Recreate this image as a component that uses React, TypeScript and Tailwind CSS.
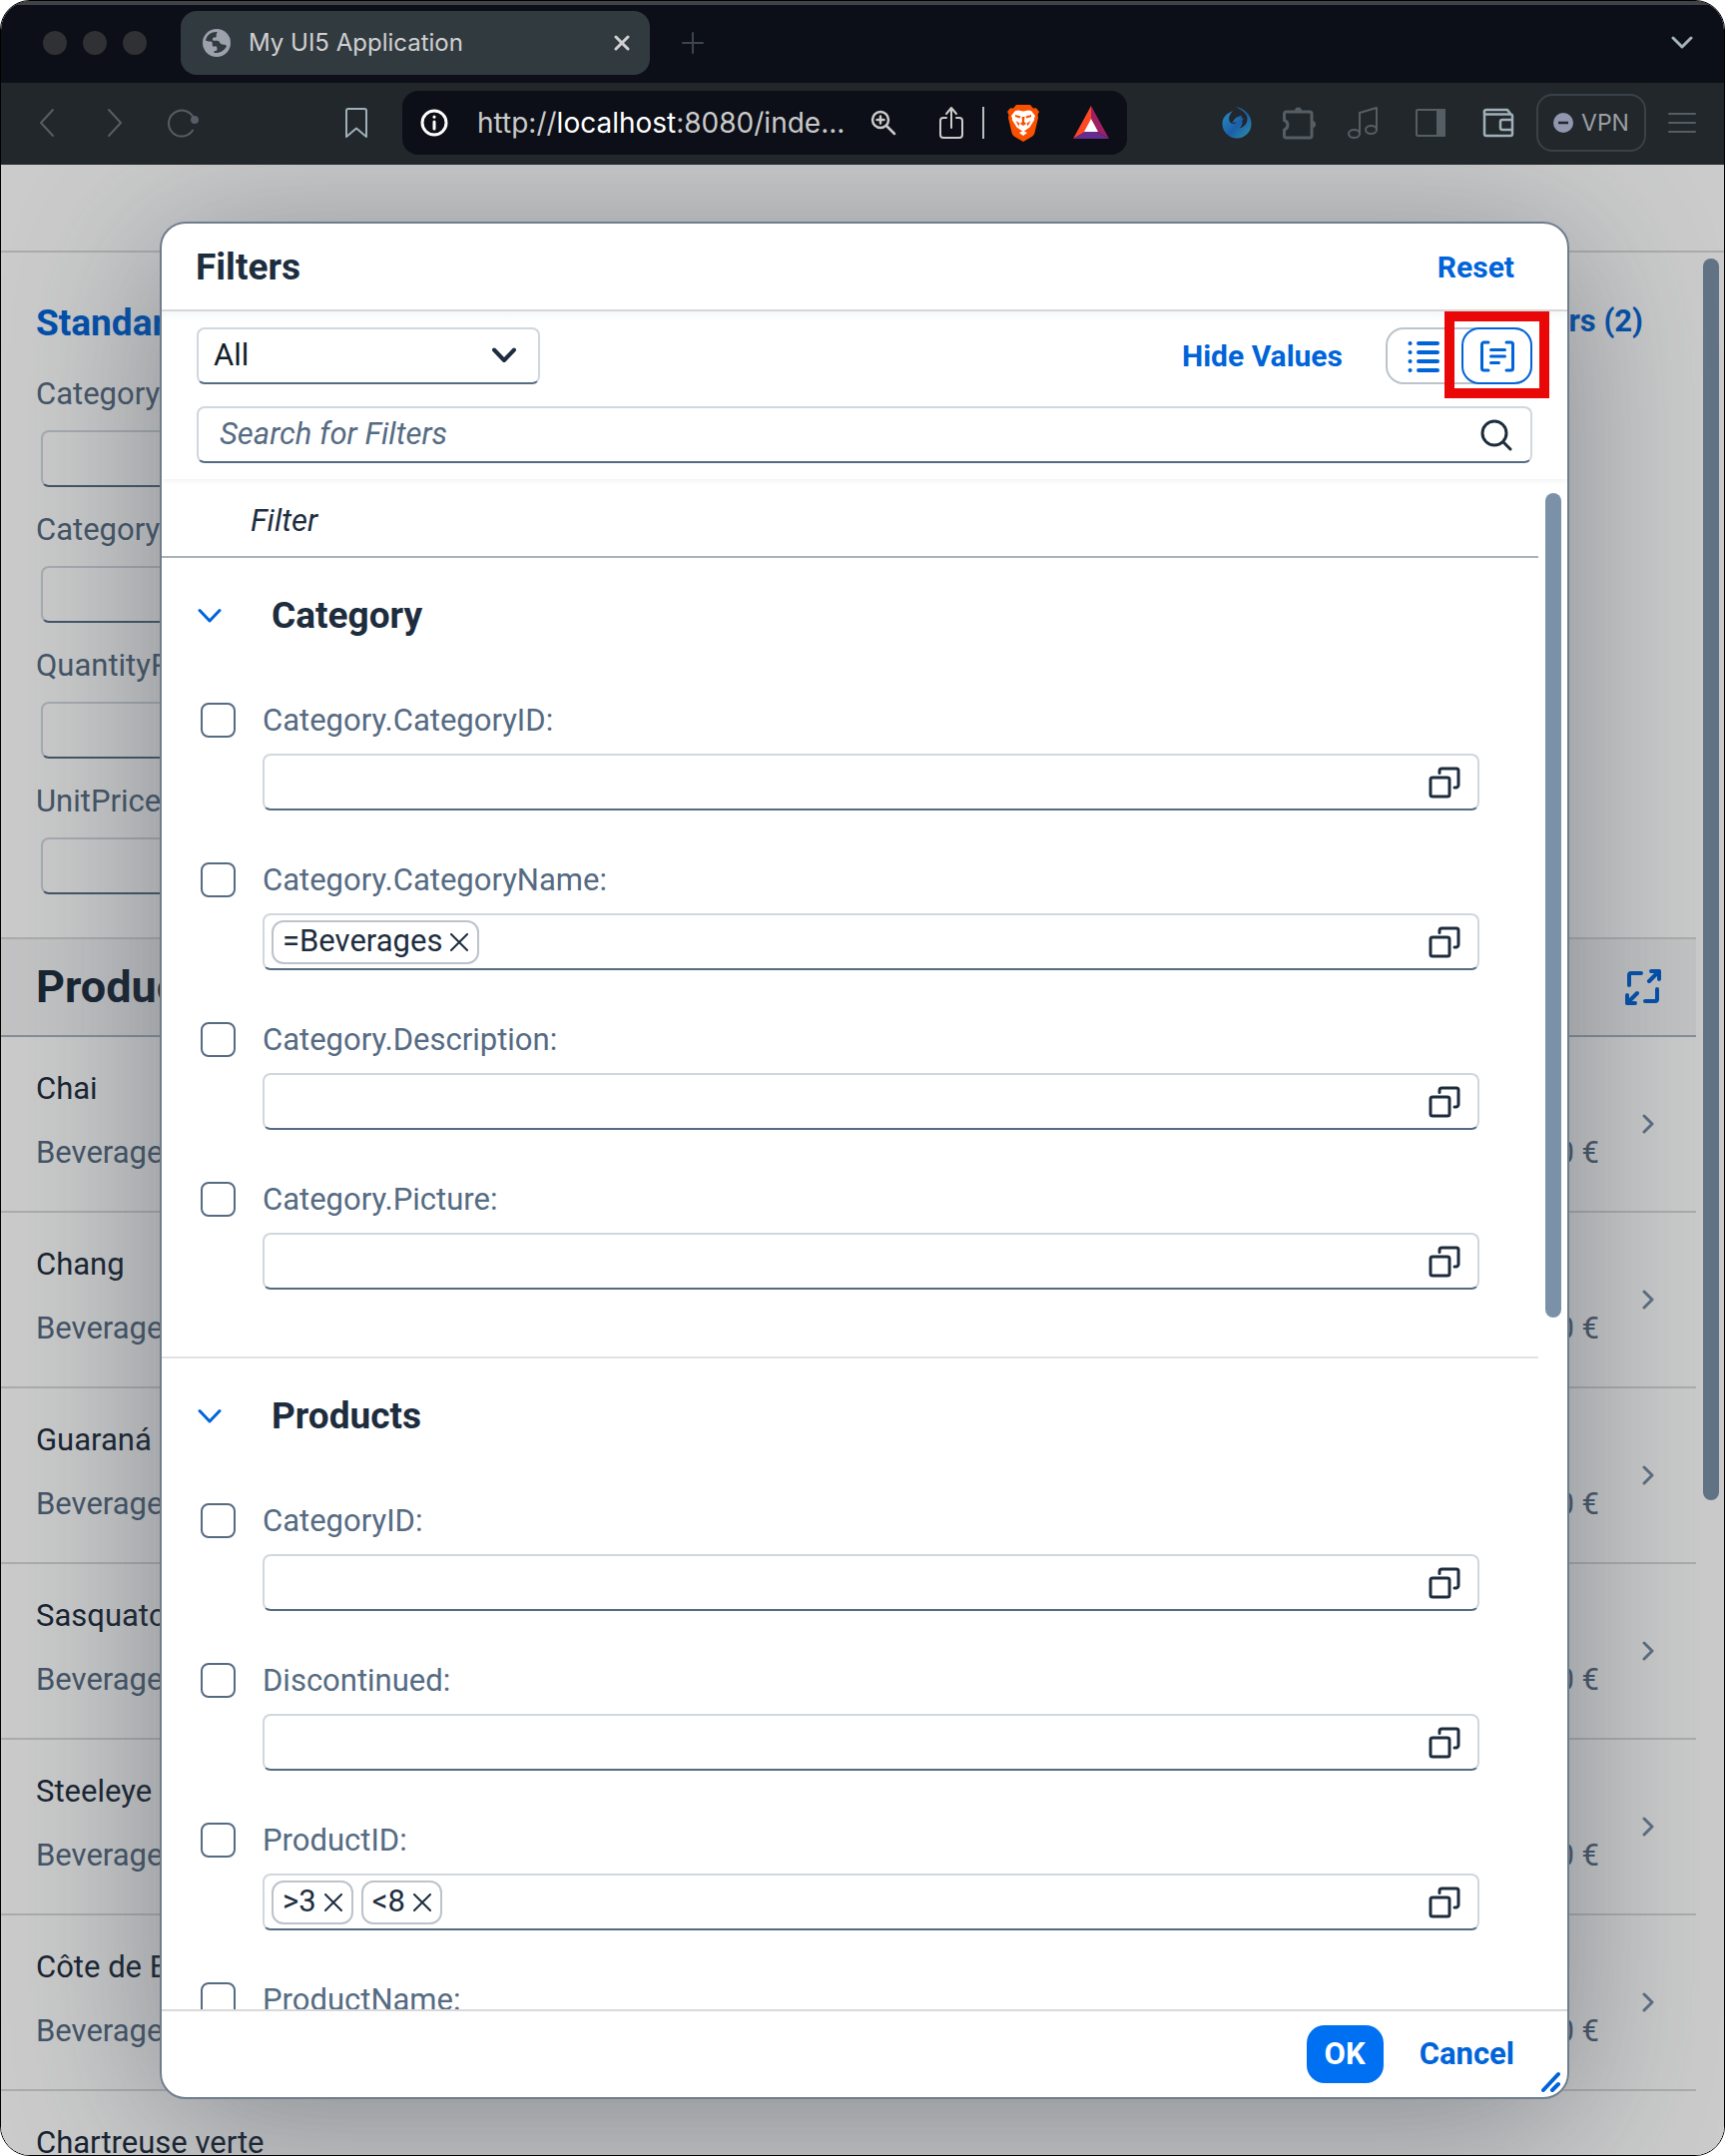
import React from "react";

type Product = { name: string; category: string; price: string };
type Field = { name: string; tokens?: string[] };

const products: Product[] = [
  { name: "Chai", category: "Beverages", price: "18.00 €" },
  { name: "Chang", category: "Beverages", price: "19.00 €" },
  { name: "Guaraná Fantástica", category: "Beverages", price: "4.50 €" },
  { name: "Sasquatch Ale", category: "Beverages", price: "14.00 €" },
  { name: "Steeleye Stout", category: "Beverages", price: "18.00 €" },
  { name: "Côte de Blaye", category: "Beverages", price: "263.50 €" },
  { name: "Chartreuse verte", category: "Beverages", price: "18.00 €" },
];

const barFields = ["Category.CategoryID:", "CategoryID:", "QuantityPerUnit:", "UnitPrice:"];

const groups: { title: string; fields: Field[] }[] = [
  {
    title: "Category",
    fields: [
      { name: "Category.CategoryID:" },
      { name: "Category.CategoryName:", tokens: ["=Beverages"] },
      { name: "Category.Description:" },
      { name: "Category.Picture:" },
    ],
  },
  {
    title: "Products",
    fields: [
      { name: "CategoryID:" },
      { name: "Discontinued:" },
      { name: "ProductID:", tokens: [">3", "<8"] },
      { name: "ProductName:" },
    ],
  },
];

function Svg({
  w,
  h,
  sw = 2,
  className,
  children,
}: {
  w: number;
  h: number;
  sw?: number;
  className?: string;
  children: React.ReactNode;
}) {
  return (
    <svg
      width={w}
      height={h}
      viewBox={`0 0 ${w} ${h}`}
      fill="none"
      stroke="currentColor"
      strokeWidth={sw}
      strokeLinecap="round"
      strokeLinejoin="round"
      className={`shrink-0 ${className ?? ""}`}
      aria-hidden="true"
    >
      {children}
    </svg>
  );
}

function ValueHelpIcon() {
  return (
    <Svg w={32} h={32} sw={3}>
      <rect x="2" y="11" width="19" height="19" rx="2" />
      <path d="M11 6.500V4.500a2.500 2.500 0 0 1 2.500-2.500H28a2 2 0 0 1 2 2V18.500a2.500 2.500 0 0 1-2.500 2.500H26" />
    </Svg>
  );
}

function DownIcon({ sw = 3 }: { sw?: number }) {
  return (
    <Svg w={24} h={16} sw={sw}>
      <path d="M2 2.500 12 13 22 2.500" />
    </Svg>
  );
}

function BrowserTabs() {
  return (
    <div className="flex h-[82px] shrink-0 items-center border-t-4 border-[#3f4347] bg-[#0c0f17] pr-[31px] pb-0.5 pl-[42px]">
      <div className="flex gap-4">
        <span className="size-6 rounded-full bg-[#2f3135]" />
        <span className="size-6 rounded-full bg-[#2f3135]" />
        <span className="size-6 rounded-full bg-[#2f3135]" />
      </div>
      <div className="ml-[34px] flex h-16 w-[470px] items-center rounded-2xl bg-[#313a3f] pr-5 pl-[22px] text-[#d0d0d2]">
        <svg width="28" height="28" viewBox="0 0 28 28" className="shrink-0" aria-hidden="true">
          <circle cx="14" cy="14" r="14" fill="#9da1ad" />
          <path
            d="M15 3C9 2.500 4 6 3 11.500c1.500.8 3 1 4.500 1 1.500 0 2.200.6 2.200 2v1.500c0 1 .6 1.500 1.500 1.500h2c.8 0 1.200.6 1.200 1.500v1.500c0 1-.6 1.500-1.800 1.500h-1v2c5 .8 11-2.500 12.400-7-.8-1-1.700-1.300-3-1.300-2.300 0-3.300-1-4.300-2.700-.6-1-1.400-1.200-2.500-1.200H11.500c-1 0-1.600-.6-1.600-1.600 0-1.100.7-1.600 1.800-1.600h.6c1 0 1.400-.5 1.400-1.400C13.700 4.700 14 3.700 15 3Z"
            fill="#313a3f"
          />
        </svg>
        <span className="ml-[18px] grow font-[Inter] text-[24px]">My UI5 Application</span>
        <button aria-label="Close tab">
          <Svg w={16} h={16} sw={3}>
            <path d="m2 2 12 12M14 2 2 14" />
          </Svg>
        </button>
      </div>
      <button aria-label="New tab" className="ml-8 text-[#3c454b]">
        <Svg w={22} h={22}>
          <path d="M11 1v20M1 11h20" />
        </Svg>
      </button>
      <button aria-label="Tab list" className="ml-auto text-[#a4b3bb]">
        <Svg w={22} h={16} sw={3}>
          <path d="m2 3 9 9 9-9" />
        </Svg>
      </button>
    </div>
  );
}

function BrowserToolbar() {
  return (
    <div className="flex h-[82px] shrink-0 items-center bg-[#22272b] pr-7 pb-0.5 pl-[38px] text-[#555e64]">
      <button aria-label="Back">
        <Svg w={16} h={30}>
          <path d="M14 2 2 15l12 13" />
        </Svg>
      </button>
      <button aria-label="Forward" className="ml-[52px]">
        <Svg w={16} h={30}>
          <path d="m2 2 12 13L2 28" />
        </Svg>
      </button>
      <button aria-label="Reload" className="ml-11">
        <Svg w={32} h={30}>
          <path d="M26 22.500A13 13 0 1 1 27.500 12" />
          <circle cx="28" cy="12" r="3" fill="currentColor" stroke="none" />
          <circle cx="28" cy="12" r="3" />
        </Svg>
      </button>
      <button aria-label="Bookmark" className="ml-[146px] text-[#9fb0b8]">
        <Svg w={24} h={32}>
          <path d="M2 4a2 2 0 0 1 2-2h16a2 2 0 0 1 2 2v26l-10-8.500L2 30Z" />
        </Svg>
      </button>
      <div className="ml-[34px] flex h-16 w-[726px] items-center rounded-2xl bg-[#0c0f17] px-[18px] text-[#cacaca]">
        <Svg w={28} h={28} sw={3} className="text-white">
          <circle cx="14" cy="14" r="12" />
          <path d="M14 13v7" />
          <path d="M14 8v.2" />
        </Svg>
        <span className="ml-[29px] grow font-[Inter] text-[28px] whitespace-nowrap">
          http://<span className="text-white">localhost</span>:8080/inde...
        </span>
        <button aria-label="Zoom">
          <Svg w={26} h={26} sw={2.500}>
            <circle cx="10" cy="10" r="8" />
            <path d="m16 16 8 8M10 6.500v7M6.500 10h7" />
          </Svg>
        </button>
        <button aria-label="Share" className="ml-[42px]">
          <Svg w={26} h={34}>
            <path d="M8 12H5a3 3 0 0 0-3 3v14a3 3 0 0 0 3 3h16a3 3 0 0 0 3-3V15a3 3 0 0 0-3-3h-3M13 22V3M8 8l5-6 5 6" />
          </Svg>
        </button>
        <span className="ml-[18px] h-8 w-0.5 bg-[#b9bbbd]" />
        <button aria-label="Brave Shields" className="ml-[22px]">
          <svg width="34" height="38" viewBox="0 0 34 38" aria-hidden="true">
            <path d="M10 1h14l3 3.500 3-.3L33 8l-1.500 3L32 14l-3.500 15c-.5 1.800-1.500 3-3 4L17 38l-8.500-5c-1.500-1-2.500-2.200-3-4L2 14l.5-3L1 8l3-3.800 3 .3Z" fill="#fb5000" />
            <path d="M12 6.500 17 7.500l5-1 3 .5 4 5-1 2.500.2 1.500-4.700 7.500-5 3.500-1.500 1-1.500-1-5-3.500L5.800 16l.2-1.500L5 12l4-5Z" fill="#fff" />
            <path d="m13 29 4-2 4 2-4 3Z" fill="#fff" />
            <path d="m9 11 5.500 1.500-1 2L9 13Zm16 0-5.500 1.500 1 2L25 13ZM15.500 13h3l-.5 5 2 2-3 2-3-2 2-2ZM9.500 17l4 2.500-1 3ZM24.500 17l-4 2.500 1 3Z" fill="#fb5000" />
          </svg>
        </button>
        <button aria-label="Rewards" className="ml-[33px]">
          <svg width="36" height="34" viewBox="0 0 36 34" aria-hidden="true">
            <path d="M18 0v14l-6 12L0 33Z" fill="#ff4724" />
            <path d="M18 0v14l6 12 12 7Z" fill="#9e1f63" />
            <path d="M0 33l12-7h12l12 7Z" fill="#662d91" />
            <path d="m18 13 7 13H11Z" fill="#fff" />
          </svg>
        </button>
      </div>
      <button aria-label="Phoenix extension" className="ml-auto">
        <svg width="30" height="32" viewBox="0 0 30 32" aria-hidden="true">
          <defs>
            <linearGradient id="phoenix" x1="0" y1="0" x2="1" y2="1">
              <stop offset="0" stopColor="#2a93c9" />
              <stop offset=".55" stopColor="#1b5fa8" />
              <stop offset="1" stopColor="#2c93a8" />
            </linearGradient>
          </defs>
          <path
            d="M14 0c9 2 15.500 8 15.500 17A14.500 14.500 0 0 1 15 31.500 14.500 14.500 0 0 1 .5 17C.5 11 4 7 11 4 7.500 8 6.500 11 7.500 14c1 3.500 5 4 7 1.500l-4.500.5c2-2 2.500-4.500 5-5.500 2-1 3-1 5-2l-.5 2.500 2.500.5-1.500 2c.5 4-1 6-3 8 4.500-1 8-4.500 8-9.500C25.500 7 20 3 14 0Z"
            fill="url(#phoenix)"
          />
        </svg>
      </button>
      <button aria-label="Extensions" className="ml-[30px]">
        <Svg w={34} h={34} sw={3}>
          <path d="M2.500 8a2 2 0 0 1 2-2H28a2 2 0 0 1 2 2v22a2 2 0 0 1-2 2H4.500a2 2 0 0 1-2-2v-6a5 5 0 0 0 0-9.500Z" />
          <path d="M13 5a3.500 3.500 0 0 1 7 0ZM30.500 15a3.500 3.500 0 0 1 0 7Z" fill="currentColor" stroke="none" />
        </Svg>
      </button>
      <button aria-label="Media" className="ml-[31px]">
        <Svg w={32} h={34}>
          <path d="M13 28V7l17-5v21" />
          <ellipse cx="7.500" cy="28" rx="5.500" ry="4" />
          <ellipse cx="24.500" cy="24" rx="5.500" ry="4" />
        </Svg>
      </button>
      <button aria-label="Sidebar" className="ml-9">
        <Svg w={32} h={30}>
          <rect x="2" y="2" width="28" height="26" rx="1" />
          <path d="M23 2h7v26h-7Z" fill="currentColor" />
        </Svg>
      </button>
      <button aria-label="Wallet" className="ml-9 text-[#9fb0b8]">
        <Svg w={32} h={30} sw={2.500}>
          <path d="M2 4v22a2 2 0 0 0 2 2h24a2 2 0 0 0 2-2V8.500a2 2 0 0 0-2-2H4A2 2 0 0 1 4 2h21l3 4M30 12H20a2 2 0 0 0-2 2v6a2 2 0 0 0 2 2h10" />
        </Svg>
      </button>
      <button className="ml-[22px] flex h-[58px] w-[110px] items-center justify-center gap-2 rounded-2xl border-2 border-[#384248] font-[Inter] text-[23px] text-[#9b9fa3]">
        <svg width="20" height="20" viewBox="0 0 20 20" aria-hidden="true">
          <circle cx="10" cy="10" r="10" fill="#9297b0" />
          <path d="M5 10h10" stroke="#22272b" strokeWidth="2.500" />
        </svg>
        VPN
      </button>
      <button aria-label="Menu" className="ml-[22px]">
        <Svg w={28} h={24}>
          <path d="M1 3h26M1 12h26M1 21h26" />
        </Svg>
      </button>
    </div>
  );
}

function Application() {
  return (
    <div className="flex h-full flex-col overflow-hidden bg-white text-[31px] text-[#1d2d3e]">
      <header className="h-[88px] shrink-0 border-b-2 border-[#d9d9d9]" />
      <div className="flex min-h-0 grow">
        <div className="grow overflow-hidden">
          <section className="px-[35px]">
            <div className="flex h-[122px] items-center justify-between text-[#0064d9]">
              <button className="pt-5 text-[37px] leading-10 font-bold">Standard</button>
              <button className="mr-[18px] pt-4 leading-10 font-bold">Adapt Filters (2)</button>
            </div>
            <form className="pb-5">
              {barFields.map((name) => (
                <label key={name} className="flex h-[136px] flex-col text-[#556b82]">
                  <span className="h-14 leading-10">{name}</span>
                  <input
                    type="text"
                    className="ml-[5px] h-[57px] w-[400px] rounded-lg border-2 border-[#d1d7de] border-b-[#556b82] bg-white"
                  />
                </label>
              ))}
            </form>
          </section>
          <section>
            <div className="flex h-[100px] items-center justify-between border-y-2 border-t-[#d9d9d9] border-b-[#a8b3bd] bg-[#f5f6f7] pr-[35px] pl-[35px]">
              <h1 className="text-[45px] font-bold">Products (77)</h1>
              <button aria-label="Full screen" className="text-[#0064d9]">
                <Svg w={36} h={36} sw={4}>
                  <path d="M4 16V6a2 2 0 0 1 2-2h10M20 32h10a2 2 0 0 0 2-2V20" />
                  <path d="m24 12 10-10M26 2h8v8M12 24 2 34M2 26v8h8" />
                </Svg>
              </button>
            </div>
            <ul>
              {products.map((p) => (
                <li key={p.name} className="flex h-[176px] items-center border-b-2 border-[#d9d9d9] pr-[42px] pl-[35px]">
                  <div className="flex grow flex-col gap-6 pb-1.5">
                    <span className="leading-10">{p.name}</span>
                    <div className="flex justify-between text-[#556b82]">
                      <span className="leading-10">{p.category}</span>
                      <span className="mr-[43px] leading-10">{p.price}</span>
                    </div>
                  </div>
                  <Svg w={12} h={20} sw={3} className="text-[#758ca4]">
                    <path d="m2 2 8 8-8 8" />
                  </Svg>
                </li>
              ))}
            </ul>
          </section>
        </div>
        <div className="w-7 shrink-0 px-[7px] pt-1.5">
          <div className="h-[1244px] w-4 rounded-full bg-[#7b91a8]" />
        </div>
      </div>
    </div>
  );
}

function FilterRow({ field, id }: { field: Field; id: string }) {
  return (
    <div className="grid h-40 grid-cols-[62px_1fr] grid-rows-[36px_57px] gap-y-[15px] pt-[30px]">
      <input
        type="checkbox"
        aria-label={`Select ${field.name}`}
        className="size-[35px] appearance-none rounded-lg border-2 border-[#556b82] bg-white"
      />
      <label htmlFor={id} className="leading-9 text-[#556b82]">
        {field.name}
      </label>
      <div className="col-start-2 flex items-center gap-2 rounded-lg border-2 border-[#d1d7de] border-b-[#556b82] pr-[17px] pl-[7px]">
        {field.tokens?.map((t) => (
          <span key={t} className="flex h-11 items-center gap-2 rounded-xl border-2 border-[#bcc3ca] px-[9px]">
            {t}
            <button type="button" aria-label={`Remove ${t}`}>
              <Svg w={18} h={18}>
                <path d="m1 1 16 16M17 1 1 17" />
              </Svg>
            </button>
          </span>
        ))}
        <input id={id} type="text" className="min-w-0 grow outline-none" />
        <button type="button" aria-label="Open value help">
          <ValueHelpIcon />
        </button>
      </div>
    </div>
  );
}

function FilterDialog() {
  return (
    <div
      role="dialog"
      aria-labelledby="dialog-title"
      className="relative flex min-w-0 grow flex-col overflow-hidden rounded-[26px] border-2 border-[#6f7d8c] bg-white text-[31px] text-[#1d2d3e]"
    >
      <header className="flex h-[88px] shrink-0 items-center justify-between border-b-2 border-[#d9d9d9] pr-[53px] pl-[34px]">
        <h2 id="dialog-title" className="pt-0.5 text-[37px] font-bold">Filters</h2>
        <button className="text-[30px] font-bold text-[#0064d9]">Reset</button>
      </header>
      <div className="shrink-0 bg-linear-to-b from-[#f5f7f9] to-white to-6% px-[35px] pt-4 pb-4 shadow-[0_2px_6px_rgba(0,0,0,0.06)]">
        <div className="flex items-center">
          <div className="relative w-[344px]">
            <select
              aria-label="View"
              className="h-[57px] w-full appearance-none rounded-lg border-2 border-[#d1d7de] border-b-[#556b82] bg-white pl-[15px] text-[#131e29]"
            >
              <option>All</option>
            </select>
            <span className="pointer-events-none absolute top-5 right-6">
              <DownIcon sw={4} />
            </span>
          </div>
          <button className="mr-[43px] ml-auto text-[30px] font-bold text-[#0064d9]">Hide Values</button>
          <div className="relative flex h-[57px] w-[147px] rounded-[18px] border-2 border-[#bcc3ca] text-[#0064d9]">
            <button aria-label="List view" className="flex grow items-center justify-center pr-3 pl-2">
              <Svg w={32} h={34} sw={4}>
                <path d="M11 4h19M11 13h19M11 22h19M11 31h19M2.500 4h.1M2.500 13h.1M2.500 22h.1M2.500 31h.1" />
              </Svg>
            </button>
            <button
              aria-label="Group view"
              className="relative -m-0.5 flex w-[71px] items-center justify-center rounded-[18px] border-2 border-[#0064d9] bg-white"
            >
              <Svg w={36} h={32} sw={3}>
                <path d="M9 2H4.500a2 2 0 0 0-2 2v24a2 2 0 0 0 2 2H9M27 2h4.500a2 2 0 0 1 2 2v24a2 2 0 0 1-2 2H27M11.500 9.500h14M11.500 16h14M11.500 22.500h8" />
              </Svg>
              <span className="absolute -inset-x-[19px] -top-[18px] -bottom-4 border-10 border-[#ea0707]" />
            </button>
          </div>
        </div>
        <div className="mt-[22px] flex h-[57px] items-center rounded-lg border-2 border-[#d1d7de] border-b-[#556b82] bg-white pr-[18px] pl-[21px]">
          <input
            type="search"
            aria-label="Search for Filters"
            placeholder="Search for Filters"
            className="grow italic outline-none placeholder:text-[#556b82]"
          />
          <button aria-label="Search">
            <Svg w={32} h={32} sw={3}>
              <circle cx="14" cy="14" r="12" />
              <path d="m23 23 7 7" />
            </Svg>
          </button>
        </div>
      </div>
      <div className="flex min-h-0 grow">
        <div className="grow overflow-hidden">
          <div className="flex h-[79px] items-center border-b-2 border-[#a8b3bd] pt-2 pl-[89px] italic">Filter</div>
          {groups.map((g) => (
            <section key={g.title} className="border-b-2 border-[#e0e2e4] pb-[45px]">
              <h3 className="flex h-[115px] items-center text-[37px] font-bold">
                <button aria-label={`Collapse ${g.title}`} className="mr-[50px] ml-9 text-[#0064d9]">
                  <DownIcon />
                </button>
                {g.title}
              </h3>
              <div className="pr-[59px] pl-[39px]">
                {g.fields.map((f) => (
                  <FilterRow key={f.name} field={f} id={`${g.title}-${f.name}`} />
                ))}
              </div>
            </section>
          ))}
        </div>
        <div className="w-[29px] shrink-0 pt-3.5 pl-[7px]">
          <div className="h-[826px] w-4 rounded-full bg-[#7b91a8]" />
        </div>
      </div>
      <footer className="flex h-[88px] shrink-0 items-center justify-end gap-9 border-t-2 border-[#d9d9d9] pr-[53px]">
        <button className="h-[58px] w-[77px] rounded-[18px] bg-[#0070f2] font-bold text-white">OK</button>
        <button className="font-bold text-[#0064d9]">Cancel</button>
      </footer>
      <span className="absolute right-1.5 bottom-1 text-[#0064d9]">
        <Svg w={20} h={22} sw={4}>
          <path d="M2 19 17 3M11 19l6-6" />
        </Svg>
      </span>
    </div>
  );
}

export default function App() {
  return (
    <div className="h-screen bg-white font-[Roboto,'Noto_Sans',sans-serif]">
      <div className="flex h-full flex-col overflow-hidden rounded-[30px] border border-black">
        <BrowserTabs />
        <BrowserToolbar />
        <div className="relative min-h-0 grow">
          <Application />
          <div className="absolute inset-0 flex overflow-hidden bg-black/20 pt-[57px] pr-[155px] pb-14 pl-[159px]">
            <div className="flex min-w-0 grow rounded-[26px] shadow-[0_24px_160px_rgba(60,70,82,0.5)]">
              <FilterDialog />
            </div>
          </div>
        </div>
      </div>
    </div>
  );
}
